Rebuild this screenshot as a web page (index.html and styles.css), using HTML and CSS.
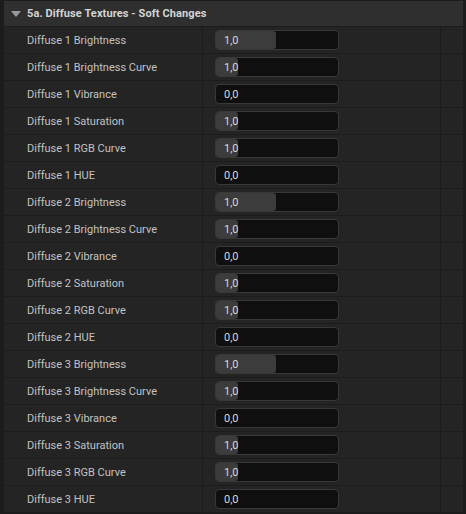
FILE: index.html
```html
<!DOCTYPE html>
<html>
<head>
    <meta charset="UTF-8">
    <title>Details</title>
    <link rel="stylesheet" href="styles.css">
</head>
<body>

<div class="panel">
    <div class="cat">
        <svg class="arrow" width="10" height="6" viewBox="0 0 10 6"><path d="M0 0 H10 L5 6 Z" fill="#9a9a9a"/></svg>
        <span>5a. Diffuse Textures - Soft Changes</span>
    </div>
    <div id="rows"></div>
</div>

<script>
    var names = ['Brightness', 'Brightness Curve', 'Vibrance', 'Saturation', 'RGB Curve', 'HUE'];
    var fills = [60, 22, 0, 22, 22, 0];
    var vals = ['1,0', '1,0', '0,0', '1,0', '1,0', '0,0'];
    var html = '';
    for (var d = 1; d <= 3; d++) {
        for (var i = 0; i < names.length; i++) {
            html += '<div class="row">' +
                '<div class="name">Diffuse ' + d + ' ' + names[i] + '</div>' +
                '<div class="val"><div class="box">' +
                (fills[i] ? '<div class="fill" style="width:' + fills[i] + 'px"></div>' : '') +
                '<span>' + vals[i] + '</span></div></div>' +
                '<div class="extra"></div>' +
                '</div>';
        }
    }
    document.getElementById('rows').innerHTML = html;
</script>

</body>
</html>
```

FILE: styles.css
```css
* { margin: 0; padding: 0; box-sizing: border-box; }
body { background: #1c1c1c; font-family: Roboto, "Liberation Sans", sans-serif; font-size: 11px; color: #c2c2c2; }
.panel { margin: 0 3px 0 4px; background: #242424; }
.cat { height: 27px; background: #2f2f2f; border-top: 1px solid #1c1c1c; border-bottom: 1px solid #1c1c1c; display: flex; align-items: center; padding-left: 7px; font-weight: bold; color: #d4d4d4; letter-spacing: 0.1px; }
.cat .arrow { margin-right: 6px; }
.row { height: 27px; display: flex; border-bottom: 1px solid #1c1c1c; }
.name { width: 199px; border-right: 1px solid #1c1c1c; padding-left: 23px; display: flex; align-items: center; }
.val { width: 238px; border-right: 1px solid #1c1c1c; padding-left: 12px; display: flex; align-items: center; }
.extra { flex: 1; }
.box { position: relative; width: 124px; height: 20px; background: #0f0f0f; border: 1px solid #383838; border-radius: 4px; display: flex; align-items: center; padding-left: 8px; color: #d8d8d8; }
.box .fill { position: absolute; left: 0; top: 0; bottom: 0; background: #3c3c3c; border-radius: 3px; }
.box span { position: relative; }
```
